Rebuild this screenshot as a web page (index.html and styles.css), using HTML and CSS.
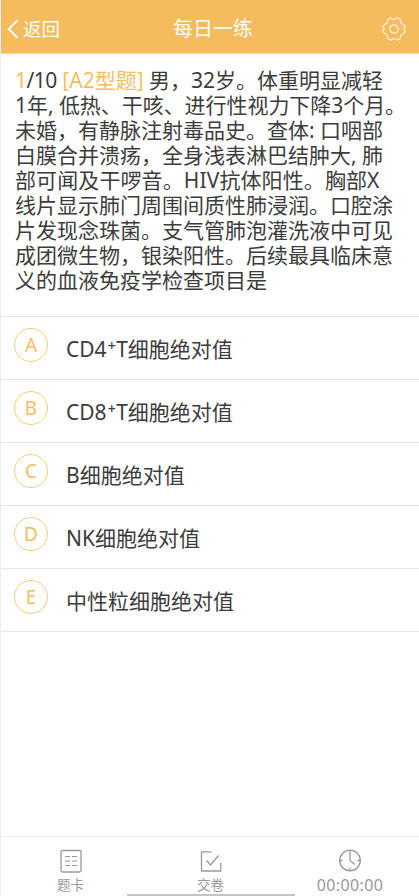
FILE: index.html
```html
<!DOCTYPE html>
<html lang="zh-CN">
<head>
<meta charset="utf-8">
<title>每日一练</title>
<link rel="stylesheet" href="styles.css">
</head>
<body>
<div class="app">
  <header class="bar">
    <div class="back">
      <svg width="12" height="20" viewBox="0 0 12 20"><path d="M10.500 1.200 1.700 10l8.800 8.800"/></svg>
      <span>返回</span>
    </div>
    <h1 class="title">每日一练</h1>
    <svg class="gear" width="24" height="24" viewBox="0 0 24 24"><circle cx="12" cy="12" r="4.200"/><path d="M8.200 1.200h1.200Q12 4.200 14.600 1.200h1.200l2.700 1.600Q18 6.800 21.600 7.500L23 9.200v1.200Q20.600 12 23 13.600v1.200l-1.400 1.700Q18 17.200 18.500 21.200l-2.700 1.600h-1.200Q12 19.800 9.400 22.800H8.200l-2.700-1.600Q6 17.200 2.400 16.500L1 14.800v-1.200Q3.400 12 1 10.400V9.200l1.400-1.700Q6 6.800 5.500 2.800Z"/></svg>
  </header>
  <main class="content">
    <p class="question">
      <span class="line"><span class="count"><b>1</b>/10</span> <b>[A2型题]</b> 男，32岁。体重明显减轻</span>
      <span class="line tight">1年, 低热、干咳、进行性视力下降3个月。</span>
      <span class="line">未婚，有静脉注射毒品史。查体: 口咽部</span>
      <span class="line">白膜合并溃疡，全身浅表淋巴结肿大, 肺</span>
      <span class="line wide">部可闻及干啰音。HIV抗体阳性。胸部X</span>
      <span class="line">线片显示肺门周围间质性肺浸润。口腔涂</span>
      <span class="line">片发现念珠菌。支气管肺泡灌洗液中可见</span>
      <span class="line">成团微生物，银染阳性。后续最具临床意</span>
      <span class="line">义的血液免疫学检查项目是</span>
    </p>
    <ul class="options">
      <li><i class="mark">A</i><span>CD4<sup>+</sup>T细胞绝对值</span></li>
      <li><i class="mark">B</i><span>CD8<sup>+</sup>T细胞绝对值</span></li>
      <li><i class="mark">C</i><span>B细胞绝对值</span></li>
      <li><i class="mark">D</i><span>NK细胞绝对值</span></li>
      <li><i class="mark">E</i><span>中性粒细胞绝对值</span></li>
    </ul>
  </main>
  <nav class="tabs">
    <div class="tab">
      <svg width="24" height="24" viewBox="0 0 24 24"><rect x="2" y="1.500" width="20" height="21.500" rx="1.500"/><path class="thin" d="M6 7.500h5.200M13 7.500h5.200M6 12h5.200M13 12h5.200M6 16.500h5.200M13 16.500h5.200"/></svg>
      <span>题卡</span>
    </div>
    <div class="tab">
      <svg width="24" height="24" viewBox="0 0 24 24"><path d="M12.500 2.800H2.500v19.200H21.800V13.500M7.500 11.500l4 4.500L19.500 6.500"/></svg>
      <span>交卷</span>
    </div>
    <div class="tab">
      <svg width="24" height="24" viewBox="0 0 24 24"><circle cx="12" cy="11.500" r="10.300"/><path d="M12 1.500V11.500l5 4M1.500 11.500h3M19.500 11.500h3M12 19v3"/></svg>
      <span class="time">00:00:00</span>
    </div>
  </nav>
  <div class="home"></div>
</div>
</body>
</html>
```
FILE: styles.css
```css
* { box-sizing: border-box; }
body {
  margin: 0;
  background: #fff;
  color: #3c3c3c;
  font-family: "Noto Sans", "Noto Sans CJK SC", sans-serif;
}
svg { fill: none; stroke: currentColor; display: block; }
.app {
  position: relative;
  display: flex;
  flex-direction: column;
  height: 896px;
  border-left: 1px solid #ececec;
  overflow: hidden;
}
.bar {
  display: grid;
  grid-template-columns: 1fr auto 1fr;
  align-items: center;
  height: 54px;
  padding: 4px 13px 0 6px;
  background: #f6bb5d;
  border-bottom: 1px solid #fad599;
  color: #fff;
}
.back { display: flex; align-items: center; gap: 4px; font-size: 18.500px; line-height: 26px; }
.back svg { stroke-width: 2; }
.title { margin: 1px 0 0 13px; font-size: 20px; line-height: 26px; font-weight: 400; }
.gear { justify-self: end; stroke-width: 1.2; opacity: .85; }
.content { flex: 1; }
.question {
  height: 262px;
  margin: 0;
  padding: 14px 0 0 14px;
  font-size: 21px;
  line-height: 25px;
}
.line { display: block; white-space: nowrap; }
.count { letter-spacing: -.5px; }
.tight { letter-spacing: -.05px; }
.wide { letter-spacing: .1px; }
.question b { color: #f9bd5e; font-weight: 400; }
.options { list-style: none; margin: 0; padding: 0; border-top: 1px solid #e6e6e6; }
.options li {
  display: flex;
  height: 63.100px;
  padding: 11px 0 0 13px;
  gap: 18px;
  border-bottom: 1px solid #e6e6e6;
  font-size: 21px;
  line-height: 42px;
}
.mark {
  display: flex;
  align-items: center;
  justify-content: center;
  width: 34px;
  height: 34px;
  border: 1.500px solid #fbcb7e;
  border-radius: 50%;
  color: #f9bd5e;
  font-size: 19px;
  font-style: normal;
  line-height: 30px;
}
sup { margin: 0 .5px 0 1px; font-size: 14px; font-weight: 500; line-height: 0; vertical-align: 6px; }
.tabs {
  display: grid;
  grid-template-columns: 139px 141px 138px;
  height: 60px;
  padding-top: 12px;
  border-top: 1px solid #ececec;
  color: #999;
}
.tab { display: flex; flex-direction: column; align-items: center; font-size: 13.500px; line-height: 24px; }
.tab svg { stroke-width: 1.3; }
.tab .thin { stroke-width: 1; }
.time { font-size: 16px; letter-spacing: .35px; }
.home {
  position: absolute;
  left: 126px;
  bottom: 0;
  width: 168px;
  height: 2px;
  background: #c4c4c4;
}
```
